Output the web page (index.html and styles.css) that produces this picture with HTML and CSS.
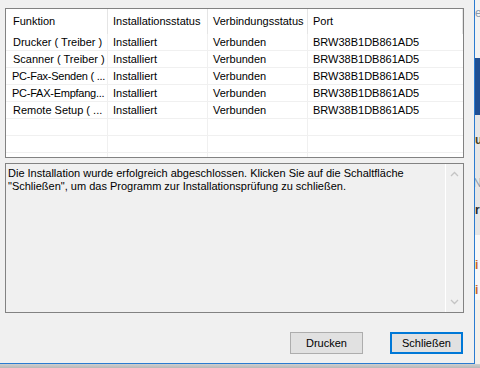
FILE: index.html
```html
<!DOCTYPE html>
<html lang="de">
<head>
    <meta charset="UTF-8">
    <title>Installationsprüfung</title>
    <link rel="stylesheet" href="styles.css">
</head>
<body>
    <div class="screen">
        <div class="dialog">
            <div class="list">
                <div class="grid">
                    <div class="head first">Funktion</div>
                    <div class="head">Installationsstatus</div>
                    <div class="head">Verbindungsstatus</div>
                    <div class="head">Port</div>

                    <div class="cell first">Drucker ( Treiber )</div>
                    <div class="cell">Installiert</div>
                    <div class="cell">Verbunden</div>
                    <div class="cell last">BRW38B1DB861AD5</div>

                    <div class="cell first">Scanner ( Treiber )</div>
                    <div class="cell">Installiert</div>
                    <div class="cell">Verbunden</div>
                    <div class="cell last">BRW38B1DB861AD5</div>

                    <div class="cell first tight">PC-Fax-Senden ( ...</div>
                    <div class="cell">Installiert</div>
                    <div class="cell">Verbunden</div>
                    <div class="cell last">BRW38B1DB861AD5</div>

                    <div class="cell first tight">PC-FAX-Empfang...</div>
                    <div class="cell">Installiert</div>
                    <div class="cell">Verbunden</div>
                    <div class="cell last">BRW38B1DB861AD5</div>

                    <div class="cell first">Remote Setup ( ...</div>
                    <div class="cell">Installiert</div>
                    <div class="cell">Verbunden</div>
                    <div class="cell last">BRW38B1DB861AD5</div>

                    <div class="cell first"></div>
                    <div class="cell"></div>
                    <div class="cell"></div>
                    <div class="cell last"></div>

                    <div class="cell first"></div>
                    <div class="cell"></div>
                    <div class="cell"></div>
                    <div class="cell last"></div>

                    <div class="cell first"></div>
                    <div class="cell"></div>
                    <div class="cell"></div>
                    <div class="cell last"></div>
                </div>
            </div>

            <div class="message">
                <p class="message-text">Die Installation wurde erfolgreich abgeschlossen. Klicken Sie auf die Schaltfläche<br>"Schließen", um das Programm zur Installationsprüfung zu schließen.</p>
                <div class="scrollbar">
                    <svg width="9" height="6" viewBox="0 0 9 6"><path d="M1 5 L4.5 1.5 L8 5" fill="none" stroke="#c4c4c4" stroke-width="1.3"/></svg>
                    <svg width="9" height="6" viewBox="0 0 9 6"><path d="M1 1 L4.5 4.5 L8 1" fill="none" stroke="#c4c4c4" stroke-width="1.3"/></svg>
                </div>
            </div>

            <div class="buttons">
                <button class="btn">Drucken</button>
                <button class="btn default">Schließen</button>
            </div>
        </div>

        <!-- window behind the dialog, only a sliver is visible -->
        <div class="behind">
            <div class="band top"><span class="glyph grey">e</span></div>
            <div class="band blue"></div>
            <div class="band mid">
                <span class="glyph brown g1">u</span>
                <span class="glyph grey g2">N</span>
                <span class="glyph dark g3">r</span>
            </div>
            <div class="band light">
                <span class="glyph orange g4">i</span>
                <span class="glyph orange g5">i</span>
            </div>
            <div class="band beige"></div>
        </div>
    </div>
    <div class="shadow"></div>
</body>
</html>
```

FILE: styles.css
```css
body {
    margin: 0;
    width: 480px;
    height: 368px;
    overflow: hidden;
    background-color: #c4c4c4;
    font-family: "Liberation Sans", Arial, sans-serif;
    font-size: 11px;
    color: #000;
}
.screen {
    display: flex;
    height: 364px;
}
.dialog {
    flex: 0 0 475px;
    height: 364px;
    box-sizing: border-box;
    border-right: 1px solid #2b7bd0;
    border-bottom: 1px solid #2b7bd0;
    background-color: #f0f0f0;
    padding: 8px 10px 0 5px;
    display: flex;
    flex-direction: column;
}
.list {
    height: 148px;
    flex-shrink: 0;
    border: 1px solid #828282;
    background-color: #fff;
    overflow: hidden;
}
.grid {
    display: grid;
    grid-template-columns: 102px 100px 100px 155px;
    grid-template-rows: 25px;
    grid-auto-rows: 17px;
}
.head, .cell {
    box-sizing: border-box;
    padding-left: 5px;
    white-space: nowrap;
    overflow: hidden;
}
.head {
    line-height: 25px;
    border-right: 1px solid #e5e5e5;
}
.cell {
    line-height: 17px;
    border-right: 1px solid #f0f0f0;
    border-bottom: 1px solid #f0f0f0;
}
.cell.last {
    border-right: none;
}
.head.first, .cell.first {
    padding-left: 7px;
}
.cell.tight {
    padding-left: 6px;
    letter-spacing: -0.25px;
}
.message {
    margin-top: 5px;
    height: 150px;
    flex-shrink: 0;
    box-sizing: border-box;
    border: 1px solid #828282;
    background-color: #f0f0f0;
    display: flex;
}
.message-text {
    flex: 1;
    margin: 0;
    padding: 3px 0 0 2px;
    line-height: 13px;
    white-space: nowrap;
}
.scrollbar {
    width: 17px;
    border-left: 1px solid #fff;
    display: flex;
    flex-direction: column;
    justify-content: space-between;
    align-items: center;
    padding: 7px 0;
}
.scrollbar svg {
    display: block;
}
.buttons {
    margin-top: 19px;
    display: flex;
    justify-content: flex-end;
    gap: 27px;
    padding-right: 1px;
}
.btn {
    width: 73px;
    height: 22px;
    padding: 0;
    font-family: "Liberation Sans", Arial, sans-serif;
    font-size: 11px;
    color: #000;
    background-color: #e1e1e1;
    border: 1px solid #adadad;
}
.btn.default {
    border: 2px solid #0078d7;
}
.behind {
    flex: 0 0 5px;
    display: flex;
    flex-direction: column;
    overflow: hidden;
}
.band {
    position: relative;
    flex-shrink: 0;
    overflow: hidden;
}
.band.top {
    height: 58px;
    background-color: #f3f3f3;
}
.band.blue {
    height: 57px;
    background-color: #1f4f93;
}
.band.mid {
    height: 120px;
    background-color: #e6e6e6;
}
.band.light {
    height: 65px;
    background-color: #f8f8f8;
}
.band.beige {
    flex: 1;
    background-color: #f4f0ea;
}
.glyph {
    position: absolute;
    top: 7px;
    left: 0;
    font-size: 12px;
    line-height: 12px;
}
.grey { color: #8a9aae; }
.dark { color: #2a2a2a; font-weight: bold; }
.brown { color: #4a4020; font-weight: bold; }
.orange { color: #c86a2a; font-weight: bold; }
.g1 { top: 19px; }
.g2 { top: 62px; left: -2px; }
.g3 { top: 89px; }
.g4 { top: 24px; }
.g5 { top: 49px; }
.shadow {
    height: 4px;
    background: linear-gradient(#cfcfcf, #b8b8b8);
}
```
